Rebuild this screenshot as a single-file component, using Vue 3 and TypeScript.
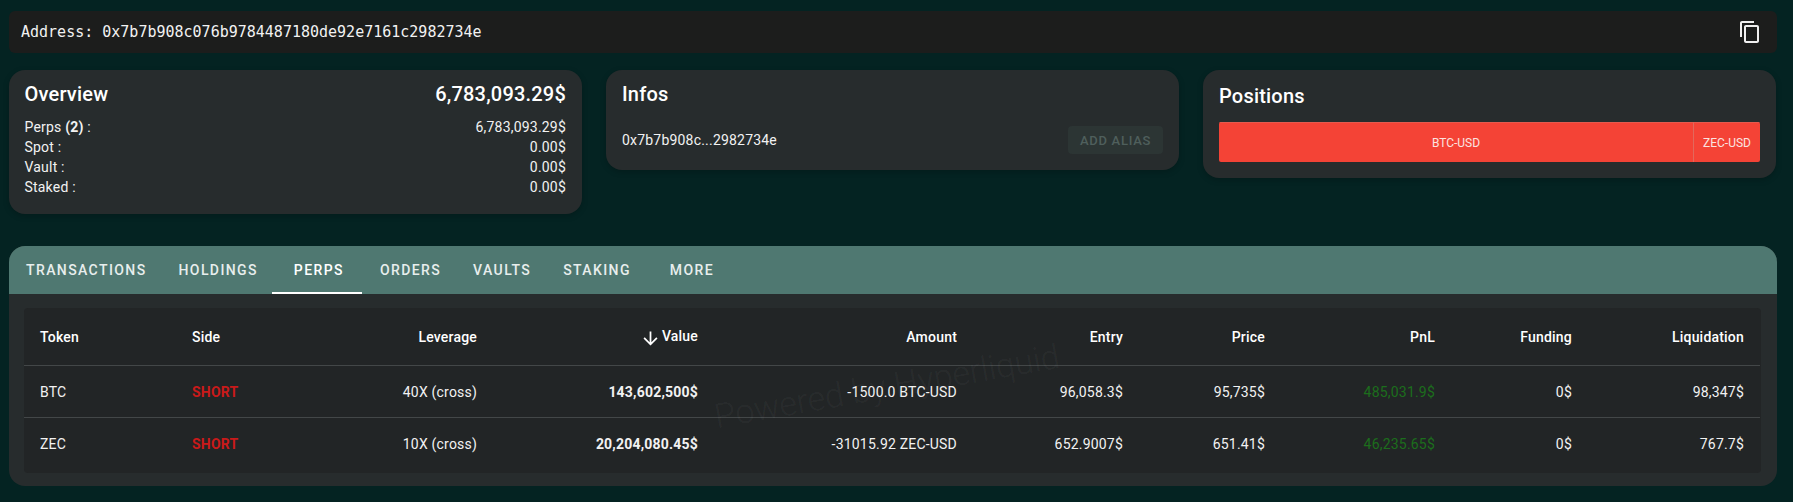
<template>
  <div class="page">
    <!-- address bar -->
    <div class="address-bar">
      <span class="address-text">Address: {{ address }}</span>
      <svg class="copy-icon" viewBox="0 0 24 24" width="24" height="24">
        <path fill="currentColor" d="M16 1H4c-1.1 0-2 .9-2 2v14h2V3h12V1zm3 4H8c-1.1 0-2 .9-2 2v14c0 1.1.9 2 2 2h11c1.1 0 2-.9 2-2V7c0-1.1-.9-2-2-2zm0 16H8V7h11v14z" />
      </svg>
    </div>

    <!-- summary cards -->
    <div class="cards">
      <section class="card overview">
        <div class="card-head">
          <h2 class="card-title">Overview</h2>
          <span class="overview-total">6,783,093.29$</span>
        </div>
        <div class="overview-rows">
          <div class="overview-row">
            <span>Perps <b>(2)</b> :</span>
            <span>6,783,093.29$</span>
          </div>
          <div v-for="row in overviewRows" :key="row" class="overview-row">
            <span>{{ row }} :</span>
            <span>0.00$</span>
          </div>
        </div>
      </section>

      <section class="card infos">
        <h2 class="card-title">Infos</h2>
        <div class="infos-row">
          <span>0x7b7b908c...2982734e</span>
          <button class="alias-btn" disabled>ADD ALIAS</button>
        </div>
      </section>

      <section class="card positions">
        <h2 class="card-title">Positions</h2>
        <div class="position-bar">
          <div class="bar-part btc">BTC-USD</div>
          <div class="bar-part zec">ZEC-USD</div>
        </div>
      </section>
    </div>

    <!-- tabs + table -->
    <section class="panel">
      <nav class="tabs">
        <div v-for="tab in tabs" :key="tab" class="tab" :class="{ active: tab === 'PERPS' }">{{ tab }}</div>
      </nav>
      <div class="table-wrap">
        <div class="watermark">Powered by Hyperliquid</div>
        <table class="perps">
          <colgroup>
            <col v-for="col in columns" :key="col.label" :style="{ width: col.width + 'px' }" />
          </colgroup>
          <thead>
            <tr>
              <th v-for="col in columns" :key="col.label" :class="{ left: col.left }">
                <svg v-if="col.label === 'Value'" class="sort-icon" viewBox="0 0 24 24" width="21" height="21">
                  <path fill="currentColor" d="M20 12l-1.41-1.41L13 16.17V4h-2v12.17l-5.58-5.59L4 12l8 8 8-8z" />
                </svg><span>{{ col.label }}</span>
              </th>
            </tr>
          </thead>
          <tbody>
            <tr v-for="row in rows" :key="row.token">
              <td class="left">{{ row.token }}</td>
              <td class="left short">SHORT</td>
              <td>{{ row.leverage }}</td>
              <td class="strong">{{ row.value }}</td>
              <td>{{ row.amount }}</td>
              <td>{{ row.entry }}</td>
              <td>{{ row.price }}</td>
              <td class="pnl">{{ row.pnl }}</td>
              <td>0$</td>
              <td>{{ row.liquidation }}</td>
            </tr>
          </tbody>
        </table>
      </div>
    </section>
  </div>
</template>

<script setup lang="ts">
const address = '0x7b7b908c076b9784487180de92e7161c2982734e'

const overviewRows = ['Spot', 'Vault', 'Staked']

const tabs = ['TRANSACTIONS', 'HOLDINGS', 'PERPS', 'ORDERS', 'VAULTS', 'STAKING', 'MORE']

const columns = [
  { label: 'Token', width: 152, left: true },
  { label: 'Side', width: 154, left: true },
  { label: 'Leverage', width: 163 },
  { label: 'Value', width: 221 },
  { label: 'Amount', width: 259 },
  { label: 'Entry', width: 166 },
  { label: 'Price', width: 142 },
  { label: 'PnL', width: 170 },
  { label: 'Funding', width: 137 },
  { label: 'Liquidation', width: 172 },
]

const rows = [
  {
    token: 'BTC',
    leverage: '40X (cross)',
    value: '143,602,500$',
    amount: '-1500.0 BTC-USD',
    entry: '96,058.3$',
    price: '95,735$',
    pnl: '485,031.9$',
    liquidation: '98,347$',
  },
  {
    token: 'ZEC',
    leverage: '10X (cross)',
    value: '20,204,080.45$',
    amount: '-31015.92 ZEC-USD',
    entry: '652.9007$',
    price: '651.41$',
    pnl: '46,235.65$',
    liquidation: '767.7$',
  },
]
</script>

<style>
html,
body {
  margin: 0;
  background: #042322;
}
</style>

<style scoped>
.page {
  box-sizing: border-box;
  width: 1793px;
  height: 502px;
  padding: 11px 16px 0 9px;
  font-family: Roboto, "Liberation Sans", sans-serif;
  font-size: 14px;
  line-height: 20px;
  letter-spacing: 0.2px;
  color: #f2f2f2;
  overflow: hidden;
}

.address-bar {
  display: flex;
  align-items: center;
  justify-content: space-between;
  height: 42px;
  padding: 0 15px 0 12px;
  background: #1c1d1c;
  border-radius: 6px;
}

.address-text {
  font-family: "DejaVu Sans Mono", "Liberation Mono", monospace;
  font-size: 15px;
  letter-spacing: 0;
}

.copy-icon {
  color: #f0f0f0;
}

.cards {
  display: grid;
  grid-template-columns: repeat(3, 1fr);
  gap: 24px;
  align-items: start;
  margin: 17px 1px 0 0;
}

.card {
  padding: 10px 16px 16px;
  background: #272c2d;
  border-radius: 16px;
  box-shadow: 0 2px 6px rgba(0, 0, 0, 0.2);
}

.card-head {
  display: flex;
  justify-content: space-between;
}

.card-title {
  margin: 0;
  font-size: 20px;
  line-height: 28px;
  font-weight: 500;
  color: #fff;
}

.overview-total {
  font-size: 20px;
  line-height: 28px;
  font-weight: 500;
  color: #fff;
}

.overview {
  padding-bottom: 17px;
  padding-left: 15.5px;
}

.overview-rows {
  margin-top: 9px;
}

.overview-row {
  display: flex;
  justify-content: space-between;
}

.overview-row b {
  font-weight: 700;
}

.infos-row {
  display: flex;
  align-items: center;
  justify-content: space-between;
  margin-top: 18px;
}

.alias-btn {
  height: 28px;
  width: 95px;
  padding: 0;
  border: none;
  border-radius: 4px;
  background: #2c3534;
  color: #4f5f5c;
  font-family: inherit;
  font-size: 13px;
  font-weight: 500;
  letter-spacing: 0.7px;
}

.positions {
  padding-top: 12px;
}

.position-bar {
  display: flex;
  height: 40px;
  margin-top: 12px;
  border-radius: 2px;
  overflow: hidden;
}

.bar-part {
  display: flex;
  align-items: center;
  justify-content: center;
  background: #f44336;
  border-top: 1px solid #e65a4e;
  color: #fbe3e0;
  font-size: 12px;
  letter-spacing: 0;
}

.btc {
  width: 475px;
  box-sizing: border-box;
  border-right: 1px solid #e2685c;
}

.zec {
  flex: 1;
}

.panel {
  margin-top: 32px;
  height: 240px;
  background: #272c2d;
  border-radius: 16px;
  overflow: hidden;
}

.tabs {
  display: flex;
  height: 48px;
  padding-left: 1px;
  background: #4f7871;
}

.tab {
  box-sizing: border-box;
  position: relative;
  display: flex;
  align-items: center;
  justify-content: center;
  min-width: 90px;
  padding: 0 16px;
  font-size: 14px;
  font-weight: 500;
  letter-spacing: 1.4px;
  color: #e8eeed;
}

.tab.active {
  color: #fff;
}

.tab.active::after {
  content: "";
  position: absolute;
  left: -2px;
  right: 2px;
  bottom: 0;
  height: 2px;
  background: #fff;
}

.table-wrap {
  position: relative;
  margin: 14px 16px 0 15px;
  padding-bottom: 3px;
  background: #222526;
  border-radius: 4px;
  overflow: hidden;
}

.watermark {
  position: absolute;
  left: 688px;
  top: 58px;
  font-size: 34px;
  line-height: 40px;
  font-weight: 300;
  letter-spacing: 0;
  white-space: nowrap;
  color: rgba(255, 255, 255, 0.05);
  transform: rotate(-10deg);
  pointer-events: none;
}

.perps {
  width: 1736px;
  table-layout: fixed;
  border-collapse: collapse;
}

.perps th,
.perps td {
  padding: 0 16px;
  text-align: right;
  white-space: nowrap;
}

.perps th {
  height: 57px;
  font-weight: 500;
  color: #fff;
  border-bottom: 1px solid #434748;
}

.perps td {
  height: 51px;
  border-bottom: 1px solid #434748;
}

.perps tr:last-child td {
  height: 52px;
  border-bottom: none;
}

.perps .left {
  text-align: left;
}

.sort-icon {
  vertical-align: -6px;
  margin: -2px 1px -2px 0;
}

.short {
  color: #c91a1a;
  font-weight: 700;
}

.strong {
  font-weight: 700;
}

.pnl {
  color: #1c6e1c;
}
</style>
